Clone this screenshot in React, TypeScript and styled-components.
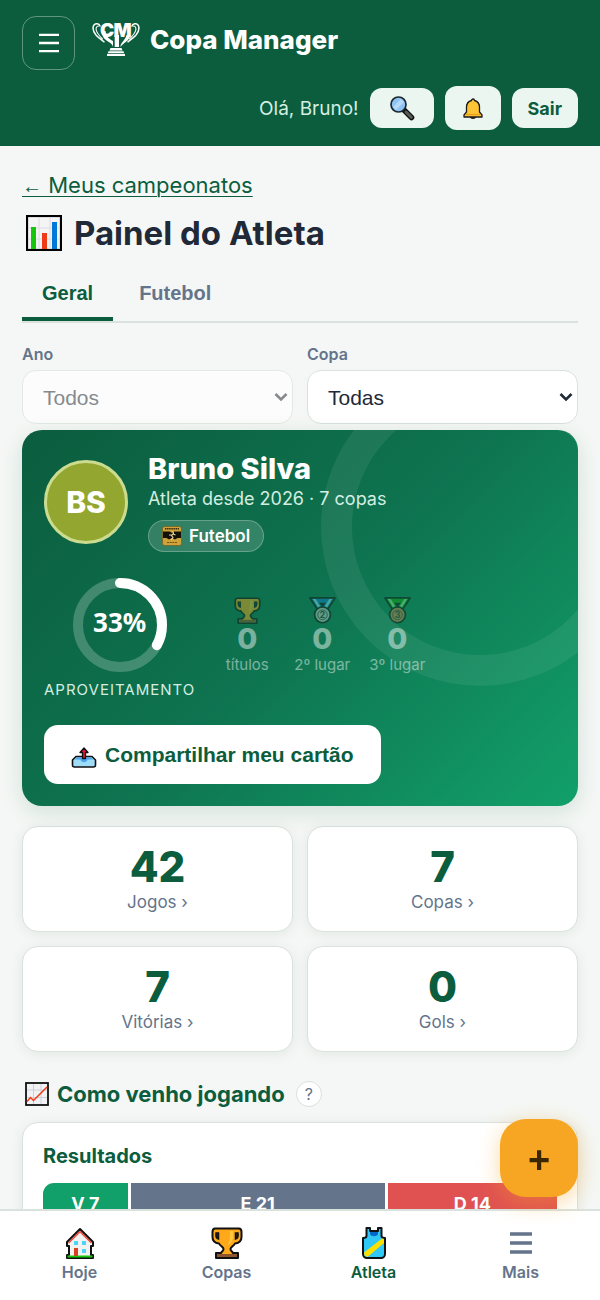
import React from 'react';
import styled, { createGlobalStyle, css } from 'styled-components';

const theme = {
  green: '#0b5d3e',
  greenLight: '#12a06a',
  mint: '#ecf6f1',
  page: '#f4f7f5',
  text: '#1f2937',
  muted: '#64748b',
  line: '#d9e2dd',
  red: '#e05252',
  orange: '#f6a623',
  inter: "Inter, 'Noto Sans', sans-serif",
  arial: "'Liberation Sans', Arial, sans-serif",
};

const STATS = [
  { value: 42, label: 'Jogos' },
  { value: 7, label: 'Copas' },
  { value: 7, label: 'Vitórias' },
  { value: 0, label: 'Gols' },
];

const RESULTS = [
  { code: 'V', total: 7, color: theme.greenLight },
  { code: 'E', total: 21, color: theme.muted },
  { code: 'D', total: 14, color: theme.red },
];

type IconProps = { size: number };

const Logo = () => (
  <svg width="48" height="36" viewBox="0 0 48 36" overflow="visible" aria-hidden="true">
    <g fill="none" stroke="#fff" strokeLinecap="round">
      <path d="M8 4C7 0.800 1.500 0.800 1 6C1 12 7 16 12 19.800" strokeWidth="1.500" />
      <path d="M6.500 4C4.500 4 3.800 6 4.200 8C5 11.500 8 14.500 10.500 17" strokeWidth="1.100" />
      <path d="M40 4C41 0.800 46.500 0.800 47 6C47 12 41 16 36 19.800" strokeWidth="1.500" />
      <path d="M41.500 4C43.500 4 44.200 6 43.800 8C43 11.500 40 14.500 37.500 17" strokeWidth="1.100" />
    </g>
    <g fontFamily="Inter, sans-serif" fontWeight="900" fontSize="19" fill="#fff">
      <text x="8" y="15">C</text>
      <text x="21.500" y="15">M</text>
    </g>
    <path
      d="M9.500 9H13.500C13.700 14 17 17 21 19V25C20.500 22.500 19 21.500 16 19.500C12 17 10 14 9.500 9ZM22.700 13H27V25H22.700ZM34.500 13H38.500C37.500 18 33.500 20 31.300 22C30 23 29 24 28.500 25C28 21 33.500 18 34.500 13Z"
      fill="#fff"
    />
    <path d="M18.500 26H29.500L30.500 28.500H17.500ZM16.500 29.300H31.500L32.300 31.300H15.700ZM15 32H33V34H15Z" fill="#fff" />
  </svg>
);

const BarsIcon = ({ size, weight }: IconProps & { weight: number }) => (
  <svg width={size} height={size} viewBox="0 0 22 22" aria-hidden="true">
    <path
      d="M0 2H22M0 11H22M0 20H22"
      stroke="currentColor"
      strokeWidth={weight}
    />
  </svg>
);

const ChevronIcon = () => (
  <svg width="14" height="10" viewBox="0 0 14 10" aria-hidden="true">
    <path d="M1.500 2L7 7.500L12.500 2" fill="none" stroke="currentColor" strokeWidth="2.600" />
  </svg>
);

const SearchIcon = ({ size }: IconProps) => (
  <svg width={size} height={size} viewBox="0 0 26 26" aria-hidden="true">
    <path d="M14.500 14.500L22.500 22.500" stroke="#111" strokeWidth="5.500" strokeLinecap="round" />
    <path d="M17 17L22.300 22.300" stroke="#5b5b5b" strokeWidth="3" strokeLinecap="round" />
    <circle cx="9.500" cy="9.500" r="7.500" fill="#8ec3f3" stroke="#1c2730" strokeWidth="1.700" />
    <path d="M4 12L12 4L15 7L7 15Z" fill="#b5d9f8" />
  </svg>
);

const BellIcon = ({ size }: IconProps) => (
  <svg width={size} height={size} viewBox="0 0 22 22" aria-hidden="true">
    <path d="M8.500 19C8.500 22 13.500 22 13.500 19Z" fill="#d98c1a" stroke="#1a1a1a" strokeWidth="1.300" />
    <path
      d="M9.500 3.500C9.500 1.500 12.500 1.500 12.500 3.500C16.500 4.500 17.500 6.500 17.500 10.500V15L20 18V20H2V18L4.500 15V10.500C4.500 6.500 5.500 4.500 9.500 3.500Z"
      fill="#ffc436"
      stroke="#1a1a1a"
      strokeWidth="1.300"
      strokeLinejoin="round"
    />
    <path d="M3.500 17.500H18.500" stroke="#e8a11c" strokeWidth="1.300" />
  </svg>
);

const BarChartIcon = ({ size }: IconProps) => (
  <svg width={size} height={size} viewBox="0 0 36 36" aria-hidden="true">
    <rect x="1" y="1" width="34" height="34" fill="#f4f4f4" stroke="#000" strokeWidth="2.200" />
    <path d="M13 2V34M24 2V34M2 13H34M2 24H34" stroke="#dcdce4" />
    <path d="M5 12H10V34H5Z" fill="#16c60c" />
    <path d="M16 18H21V34H16Z" fill="#f03a17" />
    <path d="M26 7H31V34H26Z" fill="#0078d7" />
  </svg>
);

const LineChartIcon = ({ size }: IconProps) => (
  <svg width={size} height={size} viewBox="0 0 24 24" aria-hidden="true">
    <rect x="1" y="1" width="22" height="22" fill="#f2f2f4" stroke="#111" strokeWidth="1.800" />
    <path d="M8.500 2V22M16 2V22M2 8H22M2 15.500H22" stroke="#cfcfda" />
    <path d="M2 19.500L5.500 15.500L8.500 18.500L22 5" fill="none" stroke="#f03a17" strokeWidth="1.500" />
  </svg>
);

const TrophyIcon = ({ size }: IconProps) => (
  <svg width={size} height={size} viewBox="0 0 32 32" aria-hidden="true">
    <path
      d="M4 1.500H28C29.500 1.500 30.500 3 30.500 5V10C30.500 14 28 16 24 16.500C23 19 19.500 20 19.500 22C19.500 24 21 24 22 26H27V31H5V26H10C11 24 12.500 24 12.500 22C12.500 20 9 19 8 16.500C4 16 1.500 14 1.500 10V5C1.500 3 2.500 1.500 4 1.500Z"
      fill="#ffa91a"
      stroke="#111"
      strokeWidth="2"
      strokeLinejoin="round"
    />
    <path
      d="M5 6H7.500V12C5.500 11.500 4.500 10 5 6ZM27 6H24.500V12C26.500 11.500 27.500 10 27 6Z"
      fill="#3a2600"
      stroke="#111"
      strokeWidth="1.500"
    />
    <path d="M19 4H22V11C21 15 19 17 17 18C19 14 19 10 19 4Z" fill="#ffc83d" />
    <path d="M6 27H26V30H6Z" fill="#8e562e" />
  </svg>
);

const MedalIcon = ({
  size,
  place,
  ribbon,
  stripe,
  metal,
}: IconProps & { place: number; ribbon: string; stripe: string; metal: string }) => (
  <svg width={size} height={size} viewBox="0 0 28 28" aria-hidden="true">
    <path
      d="M1 1H27L18.500 14H9.500Z"
      fill={ribbon}
      stroke="#111"
      strokeWidth="1.800"
      strokeLinejoin="round"
    />
    <path d="M10.500 6H17.500L14 11Z" fill="#111" />
    <path d="M4 2H7L13 12H10ZM24 2H21L15 12H18Z" fill={stripe} />
    <circle cx="14" cy="18.500" r="8.200" fill={metal} stroke="#111" strokeWidth="1.800" />
    <circle cx="14" cy="18.500" r="5" fill="none" stroke="#333" strokeWidth="0.800" />
    <text
      x="14"
      y="22"
      textAnchor="middle"
      fontFamily="Inter, sans-serif"
      fontWeight="700"
      fontSize="9"
      fill="#333"
    >
      {place}
    </text>
  </svg>
);

const FutebolIcon = ({ size }: IconProps) => (
  <svg width={size} height={size} viewBox="0 0 20 20" aria-hidden="true">
    <rect x="0.500" y="0.500" width="19" height="19" rx="2" fill="#d0a33a" stroke="#6d5318" strokeWidth="0.600" />
    <path d="M3 2.800H17" stroke="#3a2c0a" strokeWidth="1.600" strokeDasharray="1.500 0.600" />
    <path d="M1 5.500H8L10 7L12 5.500H19V12H15.500L13 13.500L10 12L7 13.500L4.500 12H1Z" fill="#14110a" />
    <path
      d="M11 5.500L11.500 7.500L9.500 9.500L11 11.500L9 14M9.500 9H7M11 8L13.500 9"
      stroke="#e9d9a0"
      strokeWidth="1.100"
      fill="none"
    />
    <path d="M5 16.500H15" stroke="#6d5318" strokeDasharray="2 0.700" />
  </svg>
);

const ShareIcon = ({ size }: IconProps) => (
  <svg width={size} height={size} viewBox="0 0 26 26" aria-hidden="true">
    <path
      d="M5 14.500H21L24.500 18V23C24.500 24.500 23.500 25 22.500 25H3.500C2.500 25 1.500 24.500 1.500 23V18Z"
      fill="#9fdcf7"
      stroke="#111"
      strokeWidth="1.600"
      strokeLinejoin="round"
    />
    <path d="M6 15.500H20L22 17.500H16.500C16 21 10 21 9.500 17.500H4Z" fill="#4da3ee" />
    <path
      d="M13 6L17 10.500H14.500V16.500H11.500V10.500H9Z"
      fill="#e81238"
      stroke="#111"
      strokeWidth="1.300"
      strokeLinejoin="round"
    />
  </svg>
);

const HouseIcon = ({ size }: IconProps) => (
  <svg width={size} height={size} viewBox="0 0 32 32" aria-hidden="true">
    <path
      d="M16 2L29 15V19H27V28H29V31H3V28H5V19H3V15Z"
      fill="#f2f2f2"
      stroke="#111"
      strokeWidth="2"
      strokeLinejoin="round"
    />
    <path d="M16 3.500L4 15.500L5 16.500L16 5.800L27 16.500L28 15.500Z" fill="#f04a3c" />
    <path d="M3.500 28.500H28.500V30.500H3.500Z" fill="#16c60c" />
    <path d="M10 21H14V29H10Z" fill="#d9411e" />
    <path d="M10 14H14V18H10ZM18 14H22V18H18ZM18 22H22V26H18Z" fill="#4cd3f5" />
  </svg>
);

const VestIcon = ({ size }: IconProps) => (
  <svg width={size} height={size} viewBox="0 0 32 32" aria-hidden="true">
    <path
      d="M8.500 1H12V4H20V1H23.500V9C23.500 10.500 24.500 11 27 11V27C27 29.500 25 31 23 31H9C7 31 5 29.500 5 27V11C7.500 11 8.500 10.500 8.500 9Z"
      fill="#30c8f6"
      stroke="#111"
      strokeWidth="2"
      strokeLinejoin="round"
    />
    <path d="M12 5H20V7C19 10 13 10 12 7Z" fill="#0067c8" />
    <path d="M6 25.500L24 11.500L26 12V16L9.500 30L6.500 28.500Z" fill="#fce100" />
  </svg>
);

const App: React.FC = () => {
  return (
    <>
      <GlobalStyle />
      <Header>
        <HeaderRow>
          <MenuButton type="button" aria-label="Abrir menu">
            <BarsIcon size={20} weight={2.6} />
          </MenuButton>
          <Brand href="#">
            <Logo />
            Copa Manager
          </Brand>
        </HeaderRow>
        <UserRow>
          <Greeting>Olá, Bruno!</Greeting>
          <HeaderButton type="button" aria-label="Buscar" $wide>
            <SearchIcon size={26} />
          </HeaderButton>
          <HeaderButton type="button" aria-label="Notificações" $tall>
            <BellIcon size={22} />
          </HeaderButton>
          <HeaderButton type="button">Sair</HeaderButton>
        </UserRow>
      </Header>

      <Main>
        <BackLink href="#">
          <Arrow>←</Arrow> Meus campeonatos
        </BackLink>
        <PageTitle>
          <BarChartIcon size={36} />
          Painel do Atleta
        </PageTitle>

        <Tabs>
          <Tab type="button" $active>
            Geral
          </Tab>
          <Tab type="button">Futebol</Tab>
        </Tabs>

        <Filters>
          <Field>
            <FieldLabel htmlFor="ano">Ano</FieldLabel>
            <SelectBox $disabled>
              <Select id="ano" disabled>
                <option>Todos</option>
              </Select>
              <ChevronIcon />
            </SelectBox>
          </Field>
          <Field>
            <FieldLabel htmlFor="copa">Copa</FieldLabel>
            <SelectBox>
              <Select id="copa">
                <option>Todas</option>
              </Select>
              <ChevronIcon />
            </SelectBox>
          </Field>
        </Filters>

        <Hero>
          <Profile>
            <Avatar>BS</Avatar>
            <div>
              <AthleteName>Bruno Silva</AthleteName>
              <AthleteSince>Atleta desde 2026 · 7 copas</AthleteSince>
              <Chip>
                <FutebolIcon size={20} />
                Futebol
              </Chip>
            </div>
          </Profile>
          <Summary>
            <Rate>
              <Donut>
                <svg width="94" height="94" viewBox="0 0 94 94" aria-hidden="true">
                  <circle cx="47" cy="47" r="42" fill="none" stroke="#fff" strokeOpacity="0.22" strokeWidth="10" />
                  <circle
                    cx="47"
                    cy="47"
                    r="42"
                    fill="none"
                    stroke="#fff"
                    strokeWidth="10"
                    strokeLinecap="round"
                    pathLength={100}
                    strokeDasharray="33 67"
                    transform="rotate(-90 47 47)"
                  />
                </svg>
                <DonutValue>33%</DonutValue>
              </Donut>
              <RateLabel>Aproveitamento</RateLabel>
            </Rate>
            <Podium>
              <PodiumItem>
                <TrophyIcon size={27} />
                <PodiumValue>0</PodiumValue>
                <PodiumLabel>títulos</PodiumLabel>
              </PodiumItem>
              <PodiumItem>
                <MedalIcon size={27} place={2} ribbon="#0f7fd0" stripe="#8fe3ff" metal="#c4c9cc" />
                <PodiumValue>0</PodiumValue>
                <PodiumLabel>2º lugar</PodiumLabel>
              </PodiumItem>
              <PodiumItem>
                <MedalIcon size={27} place={3} ribbon="#13a10e" stripe="#86f08a" metal="#d98046" />
                <PodiumValue>0</PodiumValue>
                <PodiumLabel>3º lugar</PodiumLabel>
              </PodiumItem>
            </Podium>
          </Summary>
          <ShareButton type="button">
            <ShareIcon size={26} />
            Compartilhar meu cartão
          </ShareButton>
        </Hero>

        <StatGrid>
          {STATS.map((stat) => (
            <StatCard key={stat.label} href="#">
              <StatValue>{stat.value}</StatValue>
              <StatLabel>{stat.label} ›</StatLabel>
            </StatCard>
          ))}
        </StatGrid>

        <SectionHead>
          <SectionTitle>
            <LineChartIcon size={24} />
            Como venho jogando
          </SectionTitle>
          <HelpButton type="button">?</HelpButton>
        </SectionHead>
        <Panel>
          <PanelTitle>Resultados</PanelTitle>
          <ResultBar>
            {RESULTS.map((r) => (
              <Segment key={r.code} $share={r.total} $color={r.color}>
                {r.code} {r.total}
              </Segment>
            ))}
          </ResultBar>
        </Panel>
      </Main>

      <Fab type="button" aria-label="Adicionar">
        +
      </Fab>
      <BottomNav>
        <NavItem href="#">
          <HouseIcon size={32} />
          Hoje
        </NavItem>
        <NavItem href="#">
          <TrophyIcon size={32} />
          Copas
        </NavItem>
        <NavItem href="#" $active>
          <VestIcon size={32} />
          Atleta
        </NavItem>
        <NavItem href="#">
          <NavGlyph>
            <BarsIcon size={22} weight={3.6} />
          </NavGlyph>
          Mais
        </NavItem>
      </BottomNav>
    </>
  );
};

export default App;

const GlobalStyle = createGlobalStyle`
  *, *::before, *::after {
    box-sizing: border-box;
  }

  body {
    margin: 0;
    background: ${theme.page};
    color: ${theme.text};
    font-family: ${theme.inter};
    font-size: 18px;
  }

  svg {
    display: block;
    flex-shrink: 0;
  }
`;

const Header = styled.header`
  display: flex;
  flex-direction: column;
  gap: 16px;
  padding: 16px 22px;
  background: ${theme.green};
  color: #ffffff;
`;

const HeaderRow = styled.div`
  display: flex;
  align-items: flex-start;
  gap: 17px;
`;

const MenuButton = styled.button`
  display: flex;
  align-items: center;
  justify-content: center;
  width: 53px;
  height: 54px;
  padding: 0;
  border: 1px solid rgba(255, 255, 255, 0.35);
  border-radius: 14px;
  background: transparent;
  color: #ffffff;
`;

const Brand = styled.a`
  display: flex;
  align-items: center;
  gap: 10px;
  height: 47px;
  color: #ffffff;
  font-size: 26px;
  font-weight: 800;
  text-decoration: none;
`;

const UserRow = styled.div`
  display: flex;
  align-items: center;
  justify-content: flex-end;
  gap: 11px;
`;

const Greeting = styled.span`
  color: #d3eee0;
  font-size: 19px;
`;

const HeaderButton = styled.button<{ $wide?: boolean; $tall?: boolean }>`
  display: flex;
  align-items: center;
  justify-content: center;
  height: ${(props) => (props.$tall ? 44 : 40)}px;
  padding: 0 ${(props) => (props.$wide ? 19 : props.$tall ? 17 : 16)}px;
  border: 0;
  border-radius: 12px;
  background: ${theme.mint};
  color: ${theme.green};
  font-family: ${theme.inter};
  font-size: 18px;
  font-weight: 700;
`;

const Main = styled.main`
  display: flex;
  flex-direction: column;
  padding: 22px 22px 110px;
`;

const BackLink = styled.a`
  align-self: flex-start;
  color: ${theme.green};
  font-size: 22px;
  line-height: 34px;
  text-decoration: underline;
  text-underline-offset: 3px;
  text-decoration-thickness: 1px;
`;

const Arrow = styled.span`
  font-family: ${theme.arial};
  font-size: 20px;
`;

const PageTitle = styled.h1`
  display: flex;
  align-items: center;
  gap: 12px;
  margin: 8px 0 16px;
  padding-left: 4px;
  font-size: 33px;
  font-weight: 700;
  line-height: 44px;
`;

const Tabs = styled.div`
  display: flex;
  gap: 6px;
  border-bottom: 2px solid ${theme.line};
`;

const Tab = styled.button<{ $active?: boolean }>`
  height: 50px;
  padding: 0 20px 2px;
  border: 0;
  border-bottom: 4px solid
    ${(props) => (props.$active ? theme.green : 'transparent')};
  background: transparent;
  color: ${(props) => (props.$active ? theme.green : theme.muted)};
  font-family: ${theme.arial};
  font-size: 20px;
  font-weight: 700;
`;

const Filters = styled.div`
  display: grid;
  grid-template-columns: 1fr 1fr;
  gap: 14px;
  margin: 20px 0 6px;
`;

const Field = styled.div`
  display: flex;
  flex-direction: column;
  gap: 4px;
`;

const FieldLabel = styled.label`
  color: ${theme.muted};
  font-size: 16px;
  font-weight: 600;
  line-height: 23px;
`;

const SelectBox = styled.div<{ $disabled?: boolean }>`
  position: relative;
  color: ${(props) => (props.$disabled ? '#4b5058' : theme.text)};
  opacity: ${(props) => (props.$disabled ? 0.65 : 1)};

  svg {
    position: absolute;
    top: 22px;
    right: 5px;
    pointer-events: none;
  }
`;

const Select = styled.select`
  display: block;
  width: 100%;
  height: 54px;
  padding: 0 24px 0 20px;
  border: 1px solid ${theme.line};
  border-radius: 14px;
  appearance: none;
  background: #ffffff;
  color: inherit;
  font-family: ${theme.arial};
  font-size: 21px;

  &:disabled {
    opacity: 1;
  }
`;

const Hero = styled.section`
  position: relative;
  padding: 22px;
  overflow: hidden;
  border-radius: 20px;
  background: linear-gradient(135deg, ${theme.green} 0%, #0e7350 50%, ${theme.greenLight} 100%);
  box-shadow: 0 6px 22px rgba(11, 93, 62, 0.14);
  color: #ffffff;

  &::after {
    position: absolute;
    top: -62px;
    right: -61px;
    width: 318px;
    height: 318px;
    border: 31px solid rgba(255, 255, 255, 0.07);
    border-radius: 50%;
    content: '';
    pointer-events: none;
  }
`;

const Profile = styled.div`
  display: flex;
  align-items: center;
  gap: 20px;
`;

const Avatar = styled.div`
  display: flex;
  align-items: center;
  justify-content: center;
  width: 84px;
  height: 84px;
  border: 3px solid #cbdc8f;
  border-radius: 50%;
  background: #93a62f;
  font-size: 30px;
  font-weight: 800;
`;

const AthleteName = styled.h2`
  margin: 0;
  font-size: 29px;
  font-weight: 800;
  line-height: 33px;
`;

const AthleteSince = styled.p`
  margin: 0 0 8px;
  color: #d3eee0;
  font-size: 18px;
  line-height: 27px;
`;

const Chip = styled.span`
  display: flex;
  align-items: center;
  gap: 7px;
  width: fit-content;
  height: 32px;
  padding: 0 13px;
  border: 1px solid rgba(255, 255, 255, 0.25);
  border-radius: 16px;
  background: rgba(255, 255, 255, 0.16);
  font-size: 17px;
  font-weight: 600;
`;

const Summary = styled.div`
  display: flex;
  align-items: center;
  gap: 24px;
  margin: 26px 0 24px;
`;

const Rate = styled.div`
  display: flex;
  flex-direction: column;
  align-items: center;
  gap: 7px;
`;

const Donut = styled.div`
  display: grid;
  place-items: center;

  > * {
    grid-area: 1 / 1;
  }
`;

const DonutValue = styled.strong`
  padding-bottom: 6px;
  font-family: 'Noto Sans', sans-serif;
  font-size: 26px;
  font-weight: 700;
  line-height: 32px;
`;

const RateLabel = styled.span`
  color: #d3eee0;
  font-size: 15px;
  letter-spacing: 1px;
  line-height: 22px;
  text-transform: uppercase;
`;

const Podium = styled.div`
  display: flex;
  gap: 19px;
  padding-bottom: 6px;
`;

const PodiumItem = styled.div`
  display: flex;
  flex-direction: column;
  align-items: center;
  min-width: 56px;
  opacity: 0.45;
`;

const PodiumValue = styled.strong`
  font-size: 29px;
  font-weight: 800;
  line-height: 30px;
`;

const PodiumLabel = styled.span`
  font-size: 15px;
  line-height: 22px;
`;

const ShareButton = styled.button`
  display: flex;
  align-items: center;
  gap: 8px;
  height: 59px;
  padding: 0 27px;
  border: 0;
  border-radius: 14px;
  background: #ffffff;
  color: ${theme.green};
  font-family: ${theme.arial};
  font-size: 21px;
  font-weight: 700;
`;

const cardStyle = css`
  border: 1px solid ${theme.line};
  border-radius: 16px;
  background: #ffffff;
  box-shadow: 0 2px 14px rgba(20, 40, 30, 0.07);
`;

const StatGrid = styled.div`
  display: grid;
  grid-template-columns: 1fr 1fr;
  gap: 14px;
  margin: 20px 0 25px;
`;

const StatCard = styled.a`
  ${cardStyle}
  display: flex;
  flex-direction: column;
  align-items: center;
  padding: 17px 12px;
  color: ${theme.green};
  text-decoration: none;
`;

const StatValue = styled.strong`
  font-size: 42px;
  font-weight: 800;
  line-height: 46px;
`;

const StatLabel = styled.span`
  color: ${theme.muted};
  font-size: 17px;
  line-height: 24px;
`;

const SectionHead = styled.div`
  display: flex;
  align-items: center;
  gap: 11px;
  margin-bottom: 11px;
`;

const SectionTitle = styled.h2`
  display: flex;
  align-items: center;
  gap: 8px;
  margin: 0;
  padding-left: 3px;
  color: ${theme.green};
  font-size: 22px;
  font-weight: 700;
  line-height: 34px;
`;

const HelpButton = styled.button`
  width: 26px;
  height: 26px;
  padding: 0;
  border: 1px solid ${theme.line};
  border-radius: 50%;
  background: #ffffff;
  color: ${theme.muted};
  font-family: ${theme.inter};
  font-size: 16px;
  line-height: 22px;
`;

const Panel = styled.section`
  ${cardStyle}
  padding: 20px;
`;

const PanelTitle = styled.h3`
  margin: 0 0 14px;
  color: ${theme.green};
  font-size: 20px;
  font-weight: 700;
  line-height: 26px;
`;

const ResultBar = styled.div`
  display: flex;
  gap: 3px;
  height: 40px;
  overflow: hidden;
  border-radius: 11px;
`;

const Segment = styled.div<{ $share: number; $color: string }>`
  display: flex;
  flex: ${(props) => props.$share} 1 0;
  align-items: center;
  justify-content: center;
  background: ${(props) => props.$color};
  color: #ffffff;
  font-size: 18px;
  font-weight: 700;
`;

const Fab = styled.button`
  position: fixed;
  right: 22px;
  bottom: 103px;
  z-index: 2;
  width: 78px;
  height: 78px;
  padding: 4px 0 0;
  border: 0;
  border-radius: 26px;
  background: ${theme.orange};
  box-shadow: 0 6px 22px rgba(246, 166, 35, 0.4);
  color: #3a2600;
  font-family: ${theme.arial};
  font-size: 38px;
  font-weight: 700;
`;

const BottomNav = styled.nav`
  position: fixed;
  right: 0;
  bottom: 0;
  left: 0;
  z-index: 1;
  display: grid;
  grid-template-columns: repeat(4, 1fr);
  height: 91px;
  padding: 0 6px;
  border-top: 2px solid ${theme.line};
  background: #ffffff;
`;

const NavItem = styled.a<{ $active?: boolean }>`
  display: flex;
  flex-direction: column;
  align-items: center;
  gap: 1px;
  padding-top: 16px;
  color: ${(props) => (props.$active ? theme.green : theme.muted)};
  font-size: 16px;
  font-weight: 600;
  line-height: 24px;
  text-decoration: none;
`;

const NavGlyph = styled.span`
  display: flex;
  align-items: center;
  height: 32px;
`;
